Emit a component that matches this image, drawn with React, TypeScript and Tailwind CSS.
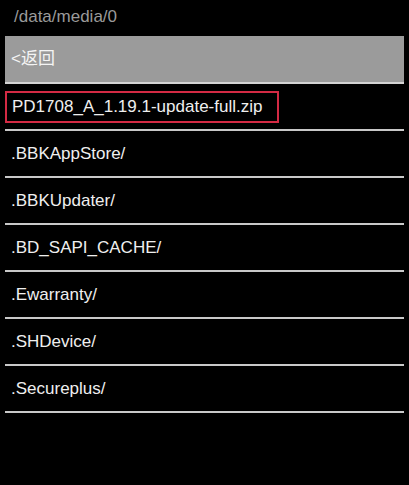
const folders = [
  '.BBKAppStore/',
  '.BBKUpdater/',
  '.BD_SAPI_CACHE/',
  '.Ewarranty/',
  '.SHDevice/',
  '.Secureplus/',
];

export default function App() {
  return (
    <div
      className="h-[485px] w-[409px] overflow-hidden bg-black text-[17px]"
      style={{ fontFamily: '"Liberation Sans", "Noto Sans CJK SC", sans-serif' }}
    >
      {/* 路徑 */}
      <div className="flex h-[36px] items-center pl-[14px] pb-[2px] text-[#9a9a9a]">/data/media/0</div>

      <div className="px-[5px]">
        {/* 返回 */}
        <div className="flex h-[48px] items-center border-b-2 border-[#d4d4d4] bg-[#9b9b9b] pl-[6px] text-[#f4f4f4]">
          &lt;返回
        </div>

        {/* 更新包 */}
        <div className="flex h-[47px] items-center border-b-2 border-[#c8c8c8] pt-[1px]">
          <div className="flex h-[32px] w-[274px] items-center border-2 border-[#d42a44] pl-[5px] text-[#efefef]">
            PD1708_A_1.19.1-update-full.zip
          </div>
        </div>

        {folders.map((f) => (
          <div key={f} className="flex h-[47px] items-center border-b-2 border-[#c8c8c8] pl-[6px] pt-[1px] text-[#efefef]">
            {f}
          </div>
        ))}
      </div>
    </div>
  );
}
